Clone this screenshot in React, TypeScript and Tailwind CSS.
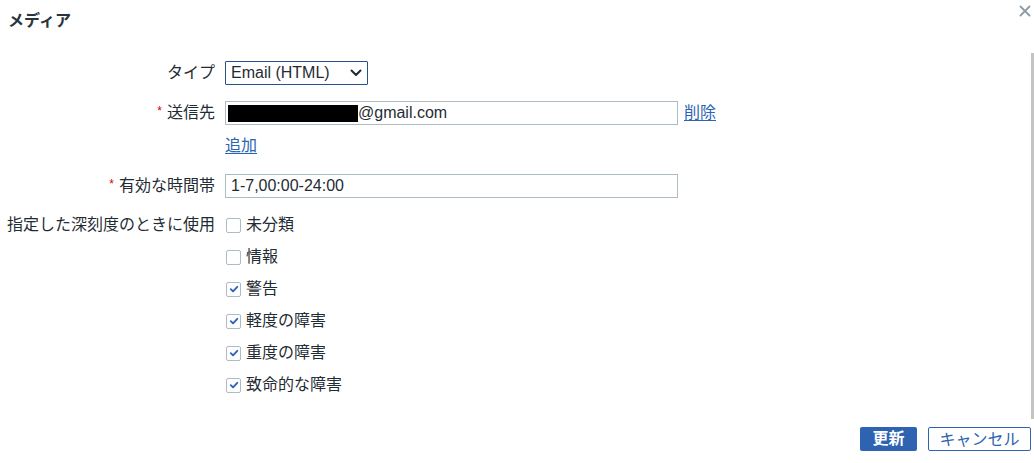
import React from "react";

const FONT = {
  fontFamily: '"Liberation Sans", "Noto Sans CJK JP", sans-serif',
};

function Check({ checked, label }: { checked: boolean; label: string }) {
  return (
    <div className="flex h-[32px] items-center">
      <span className="ml-[1px] flex h-[15px] w-[15px] items-center justify-center rounded-[2px] border border-[#acbbc4] bg-white">
        {checked && (
          <svg width="10" height="10" viewBox="0 0 10 10">
            <path d="M1.8 5.2 L4 7.3 L8.3 2.8" fill="none" stroke="#2b62b0" strokeWidth="1.8" strokeLinecap="round" strokeLinejoin="round" />
          </svg>
        )}
      </span>
      <span className="ml-[5px] text-[#1f2c33]">{label}</span>
    </div>
  );
}

function Req() {
  return <span className="mr-[5px] text-[12px] text-[#d40000] relative top-[-2px]">*</span>;
}

export default function App() {
  return (
    <div style={FONT} className="relative h-[463px] w-[1034px] overflow-hidden bg-white text-[#1f2c33]">
      <div className="flex h-[42px] items-center pl-[8px] text-[16px] font-bold text-[#2a343c]">メディア</div>
      <svg className="absolute left-[1019px] top-[5px]" width="12" height="12" viewBox="0 0 12 12">
        <path d="M1.5 1.5 L10.5 10.5 M10.5 1.5 L1.5 10.5" stroke="#8e9ba4" strokeWidth="1.8" strokeLinecap="round" />
      </svg>
      <div className="absolute left-[1031px] top-[53px] h-[366px] w-[3px] bg-[#c4c4c4]" />

      <div className="mt-[19px] grid grid-cols-[215px_1fr] gap-x-[10px] text-[16px]">
        {/* type */}
        <div className="flex h-[24px] items-center justify-end">タイプ</div>
        <div className="flex h-[24px]">
          <div className="flex w-[143px] items-center justify-between rounded-[1px] border border-[#27508e] bg-white pl-[5px] pr-[5px]">
            <span>Email (HTML)</span>
            <svg width="12" height="8" viewBox="0 0 12 8">
              <path d="M1.5 1.5 L6 6 L10.5 1.5" fill="none" stroke="#1f2c33" strokeWidth="2" strokeLinecap="round" strokeLinejoin="round" />
            </svg>
          </div>
        </div>

        {/* send to */}
        <div className="mt-[16px] flex h-[24px] items-center justify-end"><Req />送信先</div>
        <div className="mt-[16px] flex h-[24px] items-center">
          <div className="flex h-[24px] w-[453px] items-center border border-[#acbbc4] bg-white pl-[2px]">
            <span className="mt-[1px] h-[17px] w-[130px] bg-black" />
            <span>@gmail.com</span>
          </div>
          <a className="ml-[6px] text-[#2a64b3] underline underline-offset-2">削除</a>
        </div>

        <div className="mt-[9px] h-[24px]" />
        <div className="mt-[9px] flex h-[24px] items-center">
          <a className="text-[#2a64b3] underline underline-offset-2">追加</a>
        </div>

        {/* period */}
        <div className="mt-[16px] flex h-[24px] items-center justify-end"><Req />有効な時間帯</div>
        <div className="mt-[16px] flex h-[24px]">
          <div className="flex w-[453px] items-center border border-[#acbbc4] bg-white pl-[5px]">1-7,00:00-24:00</div>
        </div>

        {/* severity */}
        <div className="mt-[11px] flex h-[32px] items-center justify-end whitespace-nowrap">指定した深刻度のときに使用</div>
        <div className="mt-[11px] flex flex-col">
          <Check checked={false} label="未分類" />
          <Check checked={false} label="情報" />
          <Check checked label="警告" />
          <Check checked label="軽度の障害" />
          <Check checked label="重度の障害" />
          <Check checked label="致命的な障害" />
        </div>
      </div>

      <div className="mt-[26px] flex justify-end gap-[11px] pr-[3px]">
        <button className="h-[24px] w-[57px] rounded-[2px] bg-[#2d63b0] text-[16px] font-bold text-white">更新</button>
        <button className="h-[24px] w-[103px] rounded-[2px] border border-[#2d63b0] bg-white text-[16px] text-[#2d63b0]">キャンセル</button>
      </div>
    </div>
  );
}
